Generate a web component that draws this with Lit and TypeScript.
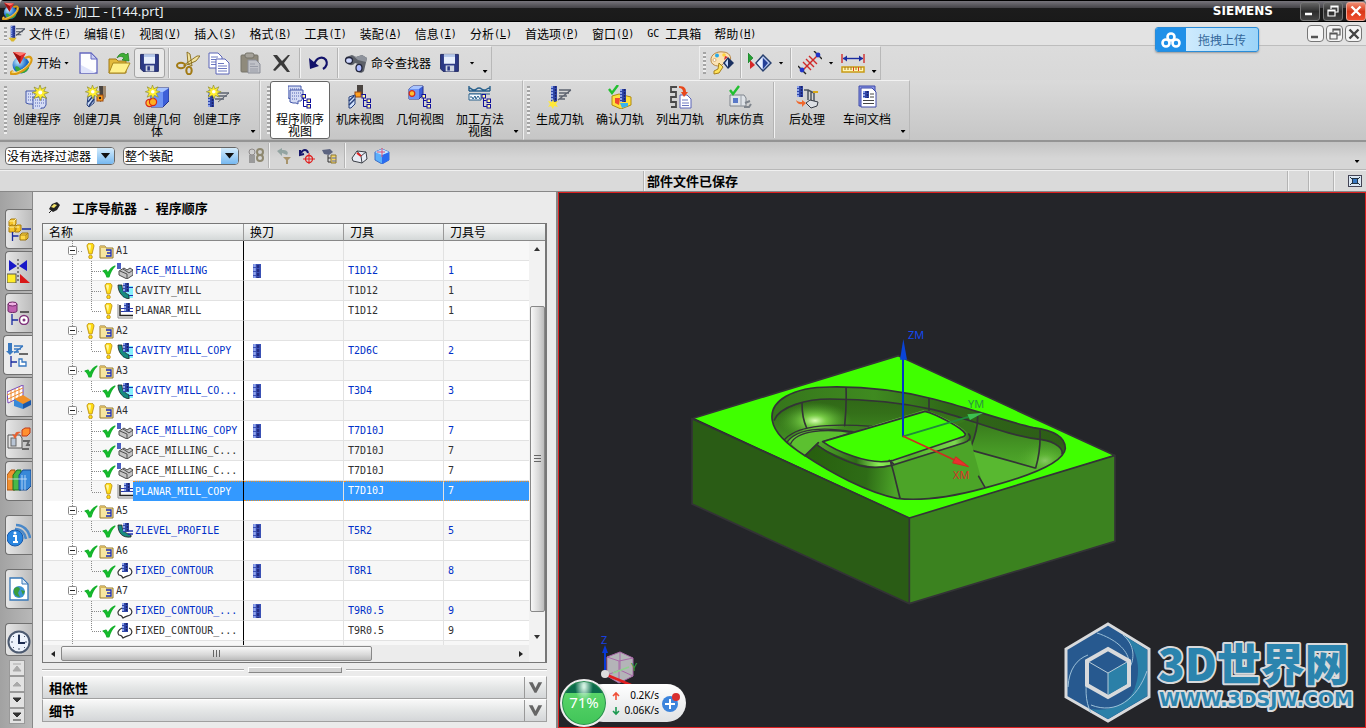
import { LitElement, html, svg, css, nothing } from "lit";
import { customElement } from "lit/decorators.js";
import { classMap } from "lit/directives/class-map.js";

const icon = (body: unknown, w = 24, h = 24) =>
  html`<svg class="ico" width=${w} height=${h} viewBox="0 0 ${w} ${h}" aria-hidden="true">${body}</svg>`;

/* ---- shared glyph parts ---- */
const star = svg`<path d="M15 0l1.500 4.200L21 2l-2.200 4.200L23.500 7.500l-4.500 1.800 2.500 4.200-4.500-2L15.500 15.500 13.800 11.500 9 13.500l2.200-4.500L7 7.500l4.300-1.500L9 2l4.500 2.200z" fill="#ffee2e" stroke="#8a8a30" stroke-width=".7"/><circle cx="15.300" cy="7.500" r="2" fill="#fff"/>`;
const miniTree = svg`<path d="M15.500 12v9.500h3M15.500 15.500h3M15.500 21.500h3" fill="none" stroke="#10109a"/><rect x="14" y="9.500" width="3.500" height="3.500" fill="#fff7a0" stroke="#10109a"/><rect x="19" y="14" width="3.500" height="3.500" fill="#fff7a0" stroke="#10109a"/><rect x="19" y="19.500" width="3.500" height="3.500" fill="#fff7a0" stroke="#10109a"/>`;
const sheet = (x: number, y: number) => svg`<path d="M${x} ${y}h13v8l-2 3h-3v3l-2-1h-3l-3-1z" fill="#d5dcf5" stroke="#4256a8"/><path d="M${x + 2} ${y + 3}h9M${x + 2} ${y + 6}h9M${x + 2} ${y + 9}h6" stroke="#5264b4" stroke-dasharray="1 1"/>`;
const cutter = (x: number, y: number, h: number) => svg`<rect x=${x} y=${y} width="6" height=${h} fill="#2f46a8"/><path d="M${x + 1} ${y}v${h}" stroke="#8fa4ea" stroke-width="2" stroke-dasharray="2 1"/><path d="M${x + 4.5} ${y}v${h}" stroke="#1b226c" stroke-width="1.500" stroke-dasharray="2 1"/>`;
const floppy = svg`<path d="M1 2h21v20H4l-3-3z" fill="#2c3a86" stroke="#161f58"/><rect x="5" y="2" width="13" height="11" fill="#e7effc"/><rect x="5" y="2" width="13" height="3" fill="#b5c8ea"/><rect x="7" y="15" width="10" height="7" fill="#cfd6e2"/><rect x="9" y="16" width="3" height="5" fill="#2c3a86"/>`;
const nx = svg`<circle cx="11" cy="14" r="8.500" fill="url(#gl)"/><path d="M5 16c3-2 5 1 7 5 3-2 5-5 7-8 1 6-4 10-9 9-3-1-5-3-5-6z" fill="#36a83c"/><path d="M3 20c-5 3-1 4 5 2 8-3 15-11 13-15-1-2-4-1-6 0" fill="none" stroke="#d99a14" stroke-width="2.500"/><path d="M3 20c-3 2 0 2 4 1C15 18 21 12 20 8" fill="none" stroke="#ffe27a" stroke-width="1"/><path d="M3 1l13 1-6 11z" fill="#e02828"/><path d="M3 1l7 12 1-9z" fill="#9d1010"/><path d="M3 1l13 1-6 3z" fill="#ff7a70"/>`;
const arrowTools = svg`<path d="M13 8h11M12 11h10M10 14h9" stroke="#5e6470" stroke-width="1.500"/><path d="M24 8L13 17" stroke="#5e6470"/>`;

const I = {
  nx: icon(nx),
  fresh: icon(svg`<path d="M4 2h11l6 6v14H4z" fill="#fdfdff" stroke="#6468c0" stroke-width="1.300"/><path d="M5 14L20 22H5z" fill="#dfe3fa"/><path d="M15 2v6h6z" fill="#c9cef2" stroke="#6468c0"/>`),
  open: icon(svg`<path d="M2 8h7l2 2h8v12H2z" fill="#e2b93c" stroke="#a07a18"/><path d="M2 22l4-10h17l-5 10z" fill="#fff08a" stroke="#a8861c"/><path d="M10 7c2-5 7-6 9-3l2-2 1 8-7-1 2-2c-2-2-5-2-7 0z" fill="#3fae36" stroke="#1e7a1c" stroke-width=".7"/>`),
  cut: icon(svg`<path d="M8 14L21 5l3 0-4 5-12 5zM12 13L11 1l3 2 2 12z" fill="#f2e3a0" stroke="#866a18" stroke-width=".9"/><ellipse cx="5" cy="14.500" rx="4" ry="2.700" fill="none" stroke="#a27a14" stroke-width="2"/><ellipse cx="13" cy="19.500" rx="2.700" ry="3.800" fill="none" stroke="#a27a14" stroke-width="2"/>`),
  copy: icon(svg`<path d="M2 2h9l4 4v11H2z" fill="#fff" stroke="#5a64b8"/><path d="M4 6h7M4 8.500h8M4 11h8M4 13.500h8" stroke="#6c78c0"/><path d="M9 8h9l4 4v11H9z" fill="#fff" stroke="#5a64b8"/><path d="M11 12.500h6M11 15h9M11 17.500h9M11 20h9" stroke="#6c78c0"/>`),
  paste: icon(svg`<rect x="3" y="4" width="17" height="17" rx="1" fill="#8f8a7c" stroke="#77746a"/><rect x="7" y="2" width="9" height="5" rx="2" fill="#a5a29a" stroke="#77746a"/><path d="M10 9h8l4 4v9H10z" fill="#c0c2c8" stroke="#8b8e98"/><path d="M12 13h5M12 15.500h8M12 18h8M12 20h8" stroke="#9a9da8"/>`),
  del: icon(svg`<path d="M4 4l4 0 5 6 6-6 2 0-6 8 6 9h-3l-6-7-6 6-2-1 6-7z" fill="#3a3a3a"/>`),
  undo: icon(svg`<path d="M7 14c2-8 9-9 12-5 2 4 0 7-3 9" fill="none" stroke="#12126a" stroke-width="2.200"/><path d="M2 7l1 11 9-3z" fill="#12126a"/>`),
  find: icon(svg`<path d="M2 6l6-2 4 2 6-2 5 3-3 13c-2 3-6 2-7-1l1-6-3-1c-3 4-8 2-10-2z" fill="#5c6068"/><path d="M8 4l4 2 6-2 5 3-1 4-8-2z" fill="#8e939c"/><ellipse cx="5" cy="9.500" rx="3.500" ry="3" fill="#cfd8ff" stroke="#23263c" stroke-width="1.300"/><ellipse cx="15" cy="17" rx="3" ry="3.600" fill="#aebcff" stroke="#23263c" stroke-width="1.300"/>`),
  palette: icon(svg`<path d="M1 10C0 3 8 0 13 1c6 0 9 5 7 9-2 3-7 1-8 4-3 2-10 1-11-4z" fill="#fbe3b4" stroke="#b98848"/><circle cx="7" cy="4.500" r="2" fill="#29a8e8"/><circle cx="14" cy="4" r="1.800" fill="#ffd23a"/><circle cx="4.500" cy="9" r="1.500" fill="#fff" stroke="#b98848" stroke-width=".6"/><path d="M9 12l4 4-4 6-5 1 0-3 4-2z" fill="#ffe35a" stroke="#a8801c"/><path d="M18 6l6 6-6 6-5-6z" fill="#1a3060"/><path d="M18 8v8l-3-4z" fill="#c8ddff"/><path d="M15 5l-1 4 4-3z" fill="#d63030"/>`),
  swap: icon(svg`<path d="M0 2v10l5-5z" fill="#24a034" stroke="#147020" stroke-width=".6"/><path d="M2 9v9l5-4z" fill="#d62828"/><path d="M15 4l8 8-8 8-7-8z" fill="#b8c8f0" stroke="#28406e" stroke-width="1.500"/><path d="M14 7v11l-5-6z" fill="#e8f0ff"/><path d="M15 7v11l5-6z" fill="#244098"/>`),
  section: icon(svg`<path d="M4 20L20 4" stroke="#d02828" stroke-width="1.400"/><path d="M5 11l8 8M8 8l8 8M11 5l8 8" stroke="#d02828" stroke-width="1.400"/><path d="M0 15l8 8M16 0l8 8" stroke="#222" stroke-width="1.400"/><circle cx="4" cy="19" r="2.400" fill="#2034c8"/><circle cx="20" cy="4" r="2.400" fill="#2034c8"/>`),
  ruler: icon(svg`<path d="M1 3v9M23 3v9" stroke="#d02020" stroke-width="1.300"/><path d="M2 7.500h20" stroke="#1a2ca0" stroke-width="1.400"/><path d="M2 7.500l4-3v6zM22 7.500l-4-3v6z" fill="#1a2ca0"/><rect x="1" y="16" width="22" height="5" fill="#fff6b4" stroke="#c89a14" stroke-width="1.500"/><path d="M4 16v3M7 16v3M10 16v3M15 16v3M20 16v3" stroke="#a47414"/><path d="M12.500 16v4M17.500 16v4" stroke="#e04020"/>`),
  mkProg: icon(svg`${sheet(1, 6)}${sheet(8, 12)}${star}`),
  mkTool: icon(svg`<path d="M14 1h6v12l-5 4z" fill="#4a4440"/><path d="M18 1h3v11l-3 3z" fill="#a08a70"/><path d="M3 12l6-3v9l-5 4-2-2z" fill="#cfe0fb" stroke="#28407a"/><path d="M4 21l5-7M3 17l5-6" stroke="#28407a" stroke-width="1.500"/><rect x="12" y="10" width="6" height="6" fill="#ffa020" stroke="#9c4a10"/><circle cx="15" cy="13" r="1.200" fill="#222"/><g transform="translate(-6 0) scale(.9)">${star}</g>`),
  mkGeo: icon(svg`<path d="M6 7l5-4h13v13l-6 6H6z" fill="#3d5fd8" stroke="#24348c"/><path d="M6 7h12l6-4H11z" fill="#a8c4ff"/><path d="M6 7h12v15H6z" fill="#6f94f4"/><circle cx="4.500" cy="18" r="3.600" fill="#ffc030" stroke="#d82818" stroke-width="1.200"/><circle cx="8" cy="17" r="3.600" fill="#ffb020" stroke="#d82818" stroke-width="1.200"/><g transform="translate(-6 0) scale(.9)">${star}</g>`),
  mkOp: icon(svg`${cutter(3, 5, 17)}${arrowTools}<g transform="translate(-5 0) scale(.9)">${star}</g>`),
  vProg: icon(svg`${sheet(0, 1)}${sheet(2, 5)}${miniTree}`),
  vMach: icon(svg`<path d="M9 0h6v10H9z" fill="#4a4440"/><rect x="7" y="7" width="6" height="5" fill="#ffa020" stroke="#9c4a10"/><path d="M1 12l6-2v9l-4 4H1z" fill="#cfe0fb" stroke="#28407a"/><path d="M1 20l6-6M1 16l5-5" stroke="#28407a" stroke-width="1.500"/>${miniTree}`),
  vGeo: icon(svg`<path d="M1 4l4-3h10v9l-4 4H1z" fill="#3d5fd8" stroke="#24348c"/><path d="M1 4h10l4-3H5z" fill="#a8c4ff"/><path d="M1 4h10v10H1z" fill="#6f94f4"/><circle cx="4" cy="8.500" r="2.800" fill="#ffc030" stroke="#d82818" stroke-width="1.200"/>${miniTree}`),
  vMeth: icon(svg`<path d="M1 1v5M22 1v5M1 6h21M1 3c3 0 2 2 5 2s2-2 5-2 2 2 5 2 3-2 6-2" fill="none" stroke="#28608c" stroke-width="1.400"/><path d="M1 9h21" stroke="#28608c"/><path d="M1 9h12v6H1z" fill="#f4faff" stroke="#28608c"/><path d="M2 12h2l1 2 2-3 1 3 2-3 2 3" fill="none" stroke="#28608c"/>${miniTree}`),
  gen: icon(svg`${cutter(3, 1, 16)}<path d="M11 5h12M11 8h10M11 11h8M11 14h6M23 5L10 15" stroke="#5e6470" stroke-width="1.400"/><path d="M5 14l1 3 4-1-2 3 2 3-4-1-1 3-2-3-3 1 2-3-2-3 4 1z" fill="#ffe83a"/>`),
  verify: icon(svg`<path d="M4 11l7-2 12 3v8l-10 4-9-4z" fill="#ffdf3c" stroke="#b08a10"/><path d="M7 13h5l-1 7-4-2z" fill="#f04830"/><path d="M12 18h8v3l-6 2z" fill="#38b4f0"/>${cutter(12, 4, 13)}<path d="M1 4l3 4 6-8" fill="none" stroke="#22c030" stroke-width="2.400"/>`),
  list: icon(svg`<path d="M9 2H3v5h5v5H3v5h5v5H3" fill="none" stroke="#4a4a4a" stroke-width="1.800"/><path d="M12 10h7l4 4v9H12z" fill="#fff" stroke="#5a64b8"/><path d="M14 15h6M14 18h7M14 20.500h7" stroke="#6c78c0"/><path d="M11 1c6 0 7 3 7 6h2l-4 5-3-5h2c0-2-1-4-4-4z" fill="#e8481c"/>`),
  sim: icon(svg`<path d="M2 10h14l2 3v8H2z" fill="#dfe3e8" stroke="#7e848c"/><rect x="5" y="13" width="5" height="5" fill="#5878c8"/><path d="M13 10v11" stroke="#9aa0a8"/><path d="M17 18l5-2M16 22h5l2-3" fill="none" stroke="#7e848c" stroke-width="2"/><path d="M2 5l3 4 6-8" fill="none" stroke="#22c030" stroke-width="2.400"/>`),
  post: icon(svg`${cutter(2, 1, 11)}<path d="M9 5h4v10M13 5l6 3v10M16 6v12" fill="none" stroke="#4e5560" stroke-width="1.500"/><path d="M11 18l4-3 8 2-1 4-6 2z" fill="#dcdfe4" stroke="#343a44"/><rect x="18" y="6" width="5" height="2" fill="#d8a818"/><path d="M1 15c1 4 4 5 6 4v3l4-4-4-3v2c-2 0-4 0-6-2z" fill="#f0682c"/>`),
  doc: icon(svg`<path d="M4 1h16v20H4z" fill="#8a96e4" stroke="#3c48a8"/><path d="M6 3h11l4 4v15H6z" fill="#fff" stroke="#3c48a8"/>${cutter(8, 6, 7)}<path d="M15 9h4M15 12h4M8 15.500h11M8 18.500h11" stroke="#444"/>`),
};

const small = {
  chain: icon(svg`<path d="M1 7h6v8H1z" fill="#9a9a9a"/><circle cx="4" cy="4" r="3" fill="none" stroke="#8e8a8a"/><circle cx="12" cy="4" r="3" fill="none" stroke="#8e8870" stroke-width="2"/><circle cx="12" cy="10" r="3" fill="none" stroke="#8e8870" stroke-width="2"/>`, 16, 16),
  filt: icon(svg`<path d="M1 3l5-3v2c5 0 7 2 5 5L6 5v3z" fill="#93a4a2"/><path d="M7 9h8l-3 3v4h-2v-4z" fill="#a8946c"/>`, 16, 16),
  rotate: icon(svg`<path d="M1 2v5l4-1M2 5c2-4 6-4 7 0" fill="none" stroke="#16166c" stroke-width="2"/><circle cx="10" cy="11" r="3.500" fill="none" stroke="#e02020" stroke-width="1.300"/><path d="M10 5v11M4 11h12" stroke="#e02020"/>`, 16, 16),
  btree: icon(svg`<path d="M0 2l8-1 3 3-4 3-5-1z" fill="#5c6480"/><path d="M6 7v7h4M6 10h4" fill="none" stroke="#333"/><path d="M9 7h5v8H9z" fill="#f4d868" stroke="#8a7434"/><path d="M10 10h4M10 13h4" stroke="#5868b8"/>`, 16, 16),
  part: icon(svg`<path d="M1 10L6 3l9 1 1 7-5 4-9-2z" fill="#e8ecf4" stroke="#3c4048"/><path d="M6 3l4 5 1 7M10 8l5-4" fill="none" stroke="#3c4048"/><path d="M6 5l4 3" stroke="#e02020" stroke-width="2"/>`, 17, 16),
  cube: icon(svg`<path d="M1 4l7-3 7 3v8l-7 4-7-4z" fill="#5cb0fa" stroke="#3c6cc8"/><path d="M8 7l7-3v8l-7 4z" fill="#2b6cf0"/><path d="M1 4l7-3 7 3-7 3z" fill="#c8e6ff"/><path d="M8 0v9M3 4h8" stroke="#e05070"/>`, 17, 16),
};

const warn = icon(svg`<path d="M3 3c0-4 7-4 7 0l-2 8H5z" fill="#ffdc14" stroke="#b88a10" stroke-width=".8"/><path d="M4 3c1-2 3-1 3 0L6 9z" fill="#fff6a0"/><circle cx="6.500" cy="14" r="1.800" fill="#ffdc14" stroke="#b88a10" stroke-width=".8"/>`, 14, 16);
const ok = icon(svg`<path d="M1 8l3-1 2 3c2-4 4-6 7-7-3 3-5 6-6 11H5C4 11 3 9 1 8z" fill="#14c02c" stroke="#14b02a" stroke-width="1.200" stroke-linejoin="round"/>`, 14, 16);
const folder = icon(svg`<path d="M1 3h5l1 2h7v10H1z" fill="#f6e6a0" stroke="#96782a"/><path d="M1 3h5l1 2H1z" fill="#d8b860"/><path d="M7 7h5v6H7M8 10h4" fill="none" stroke="#1a2cb8" stroke-width="1.300"/>`, 15, 16);
const ops: Record<string, unknown> = {
  face: icon(svg`<path d="M2 8l5-3 3 2 3-2 3 2v5l-6 4-8-4z" fill="#c4c4c4" stroke="#4c4c4c"/><path d="M3 8l7 3v5M6 6l6 4 4-3" fill="none" stroke="#4c4c4c"/><rect x="0" y="0" width="4" height="6" fill="#4a5ec0"/>`, 16, 16),
  cavity: icon(svg`<rect x="6" y="3" width="10" height="12" fill="#86f0fc"/><path d="M1 2h4c0 6 3 8 7 10v4C6 15 1 10 1 2z" fill="#168a80" stroke="#222" stroke-width=".8"/><path d="M12 4.500h4M12 12.500h4" stroke="#2030b0"/>${cutter(6, 0, 9)}`, 16, 16),
  planar: icon(svg`<path d="M1 1v14h15" fill="none" stroke="#888"/><path d="M3 2v10.500h13" fill="none" stroke="#222" stroke-width="1.500"/><path d="M4 5.500h12M4 8.500h12" stroke="#2838b0"/>${cutter(7, 0, 9)}`, 16, 16),
  zlevel: icon(svg`<path d="M1 2h4c0 6 3 8 9 10v2C5 15 1 10 1 2z" fill="#168a80" stroke="#222" stroke-width=".8"/><path d="M11 8h5M11 11h5" stroke="#2030b0" stroke-width="1.300"/>${cutter(6, 0, 9)}`, 16, 16),
  fixed: icon(svg`<path d="M5 5C1 7 0 10 2 12c2 0 3 1 4 3 3-2 5-2 7-3 3-2 2-6-1-7" fill="#fff" stroke="#333" stroke-width="1.200"/>${cutter(5, 0, 9)}`, 16, 16),
};
const change = icon(svg`<rect x="0" y="0" width="8" height="14" fill="#3a50b4"/><path d="M1.500 0v14" stroke="#93a6ee" stroke-width="2.500" stroke-dasharray="3 1"/><path d="M5 1v13" stroke="#232c84" stroke-width="2.500" stroke-dasharray="3 1"/>`, 8, 14);

const tabIcons = [
  svg`<path d="M2 4l2-2h5v5l-2 2H2zM2 10l2-2h5v5l-2 2H2zM8 10l2-2h4v5l-2 2H8z" fill="#f6c428" stroke="#a87c10"/><path d="M2 4h5l2-2M7 4v4M2 10h5M8 10h4" fill="none" stroke="#fff2a0"/><path d="M5.500 15v9M5.500 19h6M15 12h9" stroke="#1a2ca0" stroke-width="1.300"/><path d="M13 18l2-2h6v5l-2 2h-6z" fill="#ffd844" stroke="#9c7410"/><path d="M13 18h6v5M19 18l2-2" fill="none" stroke="#9c7410" stroke-width=".8"/>`,
  svg`<path d="M2 1v11l8-5zM20 1v11l-8-5z" fill="#1818c8"/><path d="M11 0v24" stroke="#222" stroke-dasharray="2 2"/><rect x="0" y="15" width="9" height="9" fill="#ffec28" stroke="#555"/><path d="M13 15v9h10z" fill="#d81818"/>`,
  svg`<path d="M1 3v7c0 2 9 2 9 0V3" fill="#c060b0" stroke="#6c2464"/><ellipse cx="5.500" cy="3" rx="4.500" ry="2" fill="#f0b0e4" stroke="#6c2464"/><path d="M13 11h9" stroke="#222" stroke-width="1.300"/><path d="M5 13v11M5 19h6" stroke="#1a2ca0" stroke-width="1.300"/><circle cx="17" cy="19" r="4.500" fill="#fff" stroke="#80347c" stroke-width="1.500"/><circle cx="17" cy="19" r="1.500" fill="#80347c"/>`,
  svg`<path d="M2 0h4v8h2l-4 4-4-4h2z" fill="#3878c0"/><path d="M8 3h9M8 6h7M8 9h5M17 3L8 10" stroke="#3878c0" stroke-width="1.400"/><path d="M13 11h9" stroke="#222" stroke-width="1.300"/><path d="M5 13v11M5 19h6" stroke="#1a2ca0" stroke-width="1.300"/><path d="M13 16h3v3h4v4h-7z" fill="#fff" stroke="#3878c0" stroke-width="1.300"/>`,
  svg`<path d="M0 7L16 0v11L1 18z" fill="#fff" stroke="#7848b8"/><path d="M0 10l16-7M1 14l15-7M4 5v11M8 4v11M12 2v11" stroke="#f08c30"/><path d="M7 14l9-4 8 5-8 5z" fill="#f09028"/><path d="M7 14l9 5v5l-9-3z" fill="#3888d8"/><path d="M16 19l8-4v5l-8 4z" fill="#1c58a8"/>`,
  svg`<path d="M1 8h12l2 3v10H1z" fill="#e4e4e4" stroke="#555"/><rect x="4" y="11" width="5" height="8" fill="#b8c4d4" stroke="#666"/><path d="M16 14h6l-2 4h3M15 22h7" fill="none" stroke="#666" stroke-width="1.800"/><path d="M15 3l3-2h5v5l-3 3h-5z" fill="#ff9030" stroke="#c03818"/><path d="M14 5c-4-1-6 0-6 3l-3-1 3 5 3-5" fill="#e86030"/>`,
  svg`<path d="M0 6l4-5h4v20H0z" fill="#f09030" stroke="#a85010"/><path d="M6 6l4-5h4v20H6z" fill="#48b848" stroke="#1c7020"/><path d="M12 6l4-5h8v16l-4 4h-8z" fill="#3888d8" stroke="#184c94"/><path d="M15 6v15M18 6v15M1 10h19" stroke="#cfe6ff" stroke-width=".8"/>`,
  svg`<path d="M9 2c7 0 13 5 14 13M8 6c6 0 10 4 11 10" fill="none" stroke="#4a88c8" stroke-width="2.600"/><circle cx="8" cy="15" r="8" fill="#2a86e0" stroke="#1858a8"/><path d="M6 13h3v6M6 19h5" fill="none" stroke="#fff" stroke-width="2"/><circle cx="8" cy="10" r="1.500" fill="#fff"/>`,
  svg`<path d="M3 1h12l6 6v16H3z" fill="#fff" stroke="#3878b8" stroke-width="1.300"/><path d="M15 1v6h6z" fill="#d8e8f8" stroke="#3878b8"/><circle cx="12" cy="15" r="6" fill="#3c94d4"/><path d="M7 12c3-3 5-2 6 0l-2 4 2 4c-4 0-7-3-6-8zM14 13l4 1-2 4z" fill="#3a9c3c"/>`,
  svg`<circle cx="12" cy="12" r="10.500" fill="#eef4fc" stroke="#4c5a70" stroke-width="2"/><path d="M12 4v2M12 18v2M4 12h2M18 12h2M6 6l1 1M17 7l1-1M6 18l1-1M17 17l1 1" stroke="#4c5a70"/><path d="M12 5v8h6" fill="none" stroke="#1c2c50" stroke-width="2"/>`,
];

type Row = { group?: string; ok?: boolean; op?: string; name?: string; hot?: boolean; tool?: string; no?: string; last?: boolean; selected?: boolean };
const rows: Row[] = [
  { group: "A1" },
  { op: "face", ok: true, name: "FACE_MILLING", hot: true, tool: "T1D12", no: "1" },
  { op: "cavity", name: "CAVITY_MILL", tool: "T1D12", no: "1" },
  { op: "planar", name: "PLANAR_MILL", tool: "T1D12", no: "1", last: true },
  { group: "A2" },
  { op: "cavity", name: "CAVITY_MILL_COPY", hot: true, tool: "T2D6C", no: "2", last: true },
  { group: "A3", ok: true },
  { op: "cavity", ok: true, name: "CAVITY_MILL_CO...", hot: true, tool: "T3D4", no: "3", last: true },
  { group: "A4" },
  { op: "face", ok: true, name: "FACE_MILLING_COPY", hot: true, tool: "T7D10J", no: "7" },
  { op: "face", ok: true, name: "FACE_MILLING_C...", tool: "T7D10J", no: "7" },
  { op: "face", ok: true, name: "FACE_MILLING_C...", tool: "T7D10J", no: "7" },
  { op: "planar", name: "PLANAR_MILL_COPY", tool: "T7D10J", no: "7", last: true, selected: true },
  { group: "A5", ok: true },
  { op: "zlevel", ok: true, name: "ZLEVEL_PROFILE", hot: true, tool: "T5R2", no: "5", last: true },
  { group: "A6", ok: true },
  { op: "fixed", ok: true, name: "FIXED_CONTOUR", hot: true, tool: "T8R1", no: "8", last: true },
  { group: "A7", ok: true },
  { op: "fixed", ok: true, name: "FIXED_CONTOUR_...", hot: true, tool: "T9R0.5", no: "9" },
  { op: "fixed", ok: true, name: "FIXED_CONTOUR_...", tool: "T9R0.5", no: "9", last: true },
  {},
];

const menus: [string, string][] = [
  ["文件", "F"], ["编辑", "E"], ["视图", "V"], ["插入", "S"], ["格式", "R"], ["工具", "T"], ["装配", "A"],
  ["信息", "I"], ["分析", "L"], ["首选项", "P"], ["窗口", "O"], ["工具箱", ""], ["帮助", "H"],
];

@customElement("app-root")
export class AppRoot extends LitElement {
  static styles = css`
    :host { display: block; font: 12px/16px "Noto Sans CJK SC", "Noto Sans", sans-serif; color: #000; }
    * { box-sizing: border-box; }
    button, select { font: inherit; color: inherit; background: none; border: 0; padding: 0; margin: 0; border-radius: 0; }
    svg { display: block; flex: none; }
    .shell { display: flex; flex-direction: column; height: 100vh; min-width: 1000px; overflow: hidden; background: #d9d9d9; position: relative; }
    .defs { position: absolute; }
    .mono { font: 10px/16px "DejaVu Sans Mono", monospace; }

    .title { display: flex; align-items: center; height: 22px; flex: none; color: #fff; font-family: "Noto Sans", "Noto Sans CJK SC", sans-serif; font-size: 13px;
      background: linear-gradient(#000 0 1px, #77757c 1px, #444347 8px, #1c1c1c 8px, #1a1a1a 21px, #000 21px); padding-left: 2px; border-radius: 4px 4px 0 0; }
    .title h1 { font: inherit; margin: 0 auto 0 4px; color: #e8f0f4; }
    .brand { font: bold 12px/16px "DejaVu Sans", sans-serif; margin-right: 27px; }
    .win { display: flex; gap: 3px; }
    .win button { width: 20px; height: 19px; border: 1px solid #777; border-radius: 3px; background: linear-gradient(#666, #2c2c2c 50%, #444); display: grid; place-items: center; }
    .win .close { background: linear-gradient(#f08a70, #d83818 50%, #f05030); border-color: #e8a898; }

    .menu { display: flex; align-items: center; height: 24px; flex: none; padding: 0 4px; background: #e3e3e3; border-bottom: 1px solid #bdbdbd; }
    .menu nav { display: flex; gap: 13px; flex: 1; margin-left: 4px; }
    .menu nav button { display: flex; white-space: pre; }
    .mdi { display: flex; gap: 2px; }
    .mdi button { width: 17px; height: 17px; border: 1px solid #777; border-radius: 4px; background: #f4f4f4; display: grid; place-items: center; }
    .grip { width: 3px; align-self: stretch; margin: 5px 0; flex: none; background: repeating-linear-gradient(#a4a4a4 0 2px, #eee 2px 4px); }

    .bar { display: flex; flex: none; }
    .group { display: flex; align-items: center; border: 1px solid #b8b8b8; border-left-color: #eee; border-top-color: #f2f2f2; padding-left: 3px; }
    .group.first { border-left: 0; padding-left: 4px; }
    .group.views { padding-left: 6px; }
    .tools { height: 34px; background: linear-gradient(#dcdcdc, #d8d8d8); }
    .tools .group.display { margin-left: 207px; }
    .tool { width: 31px; height: 30px; display: grid; place-items: center; flex: none; }
    .tool.boxed { border: 1px solid #a4a4a4; border-radius: 3px; background: #e9e9e9; }
    .start, .finder { display: flex; align-items: center; height: 30px; gap: 3px; padding: 0 3px; white-space: nowrap; }
    .sep { width: 2px; align-self: stretch; margin: 1px 2px 1px 3px; background: linear-gradient(90deg, #b4b4b4 50%, #f2f2f2 50%); flex: none; }
    .drop { width: 14px; display: grid; place-items: center; align-self: stretch; flex: none; }
    .display .drop { width: 12px; }
    .drop.low { width: 12px; align-items: end; padding-bottom: 6px; }
    .caret { width: 5px; height: 3px; background: #000; clip-path: polygon(0 0, 100% 0, 50% 100%); display: block; }

    .ribbon { height: 62px; background: linear-gradient(#dadada, #c6c6c6); border-bottom: 2px solid #949494; }
    .big { width: 60px; height: 58px; padding: 3px 5px 0; display: flex; flex-direction: column; align-items: center; gap: 4px; line-height: 12px; border: 1px solid transparent; flex: none; }
    .big.on { background: #fff; border-color: #666; border-radius: 3px; }

    .filters { height: 28px; align-items: center; padding-left: 5px; background: linear-gradient(#c4c4c4, #d6d6d6 60%); border-bottom: 1px solid #b8b8b8; }
    .pick { position: relative; display: block; margin-right: 8px; width: 110px; height: 18px; border: 1px solid #666; border-radius: 4px; background: #fff; overflow: hidden; }
    .pick.wide { width: 116px; }
    .pick select { appearance: none; width: 100%; height: 16px; line-height: 16px; padding-left: 1px; }
    .pick i { position: absolute; right: 0; top: 0; width: 17px; height: 16px; background: linear-gradient(#d4ecfc, #76b8f0); display: grid; place-items: center; pointer-events: none; }
    .pick i::after { content: ""; width: 10px; height: 6px; background: #111; clip-path: polygon(0 0, 100% 0, 50% 100%); }
    .mini { width: 23px; height: 20px; display: grid; place-items: center; flex: none; }
    .mini.link { width: 18px; }
    .filters .drop { margin-left: auto; width: 18px; }

    .status { display: flex; height: 22px; flex: none; background: #dadada; border-top: 1px solid #f0f0f0; border-bottom: 1px solid #888; }
    .status > * { border-right: 1px solid #b4b4b4; box-shadow: 1px 0 #f2f2f2; }
    .status .blank { flex: 0 1 644px; }
    .status .msg { flex: 0 1 644px; margin: 0; font-weight: bold; font-size: 13px; line-height: 19px; padding-left: 3px; white-space: nowrap; }
    .status .cell { width: 21px; flex: none; }
    .status .cell.end { flex: 1 0 24px; }
    .status .full { border: 0; box-shadow: none; width: 32px; display: grid; place-items: center; padding-left: 10px; }

    .main { display: flex; flex: 1; min-height: 0; }
    .rail { width: 33px; flex: none; display: flex; flex-direction: column; align-items: flex-end; background: linear-gradient(90deg, #a2a2a2, #b8b8b8); border-right: 1px solid #888; padding-top: 17px; gap: 2px; overflow: hidden; }
    .tab { width: 27px; height: 40px; flex: none; border: 1px solid #707070; border-right: 0; border-radius: 4px 0 0 4px; background: linear-gradient(90deg, #e6e6e6, #bcbcbc); display: grid; place-items: center; }
    .tab.on { width: 29px; background: #ececec; }
    .tab.apart { margin-top: 12px; }
    .tab.cut { height: 33px; align-items: start; padding-top: 6px; }
    .nudge { display: flex; flex-direction: column; margin: 2px 7px 0 0; }
    .nudge button { width: 16px; height: 16px; background: #e2e2e2; border: 1px solid #999; display: grid; place-items: center; }

    .panel { flex: none; width: 523px; display: flex; flex-direction: column; background: #ebebeb; padding: 0 9px 6px; min-height: 0; }
    .panel h2 { display: flex; align-items: center; gap: 7px; margin: 0; height: 31px; padding-left: 6px; font-size: 13px; }
    .panel h2 svg { margin-right: 5px; }
    .grid { flex: 1; min-height: 0; border: 1px solid #777; border-right-width: 2px; background: #f2f2f2; display: grid; grid-template-columns: minmax(0, 1fr) 16px; grid-template-rows: minmax(0, 1fr) 17px; }
    .clip { overflow: hidden; min-height: 0; }
    table { border-collapse: separate; border-spacing: 0; table-layout: fixed; width: 100%; }
    col.name { width: 201px; } col.std { width: 100px; }
    th { height: 17px; padding: 0 0 0 6px; font-weight: normal; line-height: 14px; text-align: left; background: linear-gradient(#f4f6f6, #e8eaea 50%, #d4d8d8); border-bottom: 1px solid #888; border-right: 1px solid #999; }
    th:last-child { border-right: 0; }
    td { height: 20px; padding: 1px 0 0 4px; background: #fff; border-bottom: 1px solid #e2e2e2; border-right: 1px solid #e2e2e2; color: #303030; white-space: nowrap; }
    td:last-child { border-right: 0; }
    tr:nth-child(odd) td { background: #f7f7f7; }
    td.tree { padding: 0; border-right-color: #000; }
    td.swap { padding-left: 9px; }
    tr.hot td { color: #0030c8; }
    .node { display: flex; align-items: center; height: 19px; overflow: hidden; }
    .node .label { flex: 1; padding: 1px 0 0 2px; line-height: 18px; }
    .node .gap { width: 1px; }
    tr.picked td:not(.tree), .picked .label { color: #fff; background: #3399ff; border-top: 1px dotted #f09020; border-bottom: 1px dotted #f09020; }
    tr.picked td:not(.tree) { padding-top: 0; line-height: 18px; }
    tr.picked td.tree { border-bottom-width: 0; }
    .picked .node { height: 20px; }
    .vbar { display: flex; flex-direction: column; align-items: center; }
    .vhead { height: 17px; width: 100%; flex: none; border-bottom: 1px solid #888; background: linear-gradient(#f4f6f6, #e8eaea 50%, #d4d8d8); }
    .vbar button, .hbar button { width: 16px; height: 16px; display: grid; place-items: center; flex: none; }
    .vroom { flex: 49; }
    .vthumb { flex: 306; width: 15px; border: 1px solid #888; border-radius: 2px; background: linear-gradient(90deg, #f8f8f8, #d8d8d8 60%, #bbb); display: grid; place-items: center; }
    .vrest { flex: 17; }
    .hbar { display: flex; align-items: center; padding-left: 2px; background: #ececec; }
    .hthumb { flex: 309; height: 15px; border: 1px solid #888; border-radius: 2px; background: linear-gradient(#f8f8f8, #d8d8d8 60%, #bbb); display: grid; place-items: center; }
    .hrest { flex: 141; }
    .split { display: flex; align-items: center; gap: 4px; height: 13px; flex: none; }
    .split::before, .split::after { content: ""; flex: 1; height: 2px; background: linear-gradient(#aaa 50%, #fff 50%); }
    .split span { width: 94px; height: 6px; background: #d4d4d4; border: 1px solid #fff; border-right-color: #888; border-bottom-color: #888; }
    .fold { display: flex; align-items: center; height: 23px; flex: none; width: 100%; text-align: left; font-weight: bold; font-size: 13px; padding-left: 6px; background: linear-gradient(#f8f8f8, #e4e6e6 50%, #d4d6d8); border: 1px solid #a0a0a0; border-top-color: #fff; }
    .fold span { flex: 1; }
    .fold svg { border-left: 1px solid #999; }

    .gutter { width: 2px; background: #888; flex: none; }
    .view { flex: 1; min-width: 0; border: 1px solid #dc2020; background: #242529; position: relative; overflow: hidden; }
    .scene { width: 100%; height: 100%; }
    .axis { font-family: "Noto Sans", sans-serif; }
    .triad { position: absolute; left: 40px; bottom: 38px; }
    .mark { position: absolute; right: 4px; bottom: 2px; }
    .mark .name { font: 900 44px "Noto Sans CJK SC", sans-serif; }
    .mark .url { font: bold 19px "DejaVu Sans", sans-serif; }
    .speed { position: absolute; left: 1px; bottom: 0; display: flex; align-items: center; }
    .ball { width: 48px; height: 48px; border-radius: 50%; border: 2px solid #eee; box-shadow: inset 0 0 0 1px #2a8a50; background: radial-gradient(ellipse at 50% 12%, #d0f0e0 0 1px, transparent 9px), linear-gradient(#0c6c4c 0 28%, #58d468 28%, #40c458); color: #fff; font: 15px/42px "Noto Sans", sans-serif; text-align: center; z-index: 1; }
    .pill { height: 38px; margin-left: -24px; padding: 0 5px 0 28px; border-radius: 19px; background: linear-gradient(#fff, #e0e2e4); display: grid; grid-template-columns: 8px 37px 20px; grid-template-rows: 15px 15px; align-content: center; column-gap: 2px; align-items: center; font: 10px/15px "Noto Sans", sans-serif; width: 102px; }
    .pill b { font-weight: normal; text-align: right; }
    .pill .plus { grid-area: 1 / 3 / 3 / 4; }

    .upload { position: absolute; right: 107px; top: 27px; height: 25px; width: 104px; display: flex; border: 1px solid #2a8cd8; border-radius: 3px; overflow: hidden; background: linear-gradient(90deg, #e4f4ff, #9cd4f8); color: #33679a; box-shadow: 0 1px 2px #999; align-items: center; }
    .upload .cloud { width: 30px; height: 100%; background: #2090e8; display: grid; place-items: center; }
    .upload .txt { flex: 1; text-align: center; }
  `;

  caret(low = false) {
    return html`<button class=${low ? "drop low" : "drop"} aria-label="更多"><span class="caret"></span></button>`;
  }

  big(pic: unknown, text: string, on = false) {
    return html`<button class=${classMap({ big: true, on })}>${pic}<span>${text}</span></button>`;
  }

  winIcon(kind: string, color: string) {
    const body = kind === "min" ? svg`<path d="M1 9h7" stroke=${color} stroke-width="2.500"/>`
      : kind === "max" ? svg`<path d="M4 4V1h7v6H8M4 2h7M1 5h7v6H1zM1 6h7" fill="none" stroke=${color} stroke-width="1.200"/>`
      : svg`<path d="M1.500 1.500l9 9M10.500 1.500l-9 9" stroke=${color} stroke-width="2.400"/>`;
    return icon(body, 12, 12);
  }

  guide(r: Row) {
    const dot = "#8a8a8a";
    if (r.group) {
      return html`<svg width="41" height="19" viewBox="0 0 41 19"><path d="M29.500 0v5M29.500 15v4" stroke=${dot} stroke-dasharray="1 1"/><rect x="25.500" y="5.500" width="8" height="8" rx="1" fill="#fff" stroke="#888"/><path d="M27 9.500h5" stroke="#222"/><path d="M35 10.500h5" stroke=${dot} stroke-dasharray="1 2"/></svg>`;
    }
    if (!r.op) return html`<svg width="41" height="19"><path d="M29.500 0v19" stroke=${dot} stroke-dasharray="1 1"/></svg>`;
    return html`<svg width="59" height="19" viewBox="0 0 59 19"><path d="M29.500 0v19M49 10.500h9M48.500 0v${r.last ? 10 : 19}" fill="none" stroke=${dot} stroke-dasharray="1 1"/></svg>`;
  }

  row(r: Row) {
    return html`<tr class=${classMap({ hot: !!r.hot, picked: !!r.selected })}>
      <td class="tree"><div class="node">${this.guide(r)}
        ${r.group ? html`${r.ok ? ok : warn}<span class="gap"></span>${folder}<span class="label mono">${r.group}</span>`
          : r.op ? html`${r.ok ? ok : warn}<span class="gap"></span>${ops[r.op]}<span class="label mono">${r.name}</span>` : nothing}
      </div></td>
      <td class="swap">${r.hot ? change : nothing}</td>
      <td class="mono">${r.tool}</td>
      <td class="mono">${r.no}</td>
    </tr>`;
  }

  scene() {
    const edge = "#333336";
    return svg`
      <defs>
        <clipPath id="pocket"><path d="M277 305C266 245 340 204 450 204C570 202 680 220 760 240C850 262 960 302 1060 326C1120 334 1156 352 1156 388C1152 432 1040 474 910 508C800 538 720 546 650 538C560 520 450 460 375 410C310 370 282 335 277 305Z"/></clipPath>
        <linearGradient id="wall" x1="0" x2="1"><stop offset="0" stop-color="#35741b"/><stop offset=".35" stop-color="#3f8a20"/><stop offset=".6" stop-color="#2f6618"/><stop offset="1" stop-color="#2d5c17"/></linearGradient>
        <linearGradient id="fillet" x1="0" y1="0" x2="0" y2="1"><stop offset="0" stop-color="#2c5e16"/><stop offset=".25" stop-color="#347019"/><stop offset=".55" stop-color="#479a26"/><stop offset="1" stop-color="#64cc38"/></linearGradient>
        <radialGradient id="shine"><stop offset="0" stop-color="#dcffb8"/><stop offset=".3" stop-color="#86e050" stop-opacity=".8"/><stop offset="1" stop-color="#4ca428" stop-opacity="0"/></radialGradient>
        <linearGradient id="side" x1="400" x2="700" y1="400" y2="430" gradientUnits="userSpaceOnUse"><stop offset="0" stop-color="#28600f"/><stop offset=".55" stop-color="#2e6c16"/><stop offset=".85" stop-color="#4ca428"/></linearGradient>
        <linearGradient id="rim" x1="415" x2="870" y1="0" y2="0" gradientUnits="userSpaceOnUse"><stop offset="0" stop-color="#50a82c"/><stop offset=".25" stop-color="#2f6c18"/><stop offset=".4" stop-color="#8cf058"/><stop offset=".6" stop-color="#50b028"/><stop offset=".9" stop-color="#7cd850"/><stop offset="1" stop-color="#2f6c18"/></linearGradient>
      </defs>
      <g transform="translate(121 126) scale(.33333)" stroke-linejoin="round" stroke-linecap="round">
        <path d="M36 299L690 597V854L36 555Z" fill="#2a5c15"/>
        <path d="M688 597L1305 409V667L688 854Z" fill="#3b821f"/>
        <path d="M42 297L655 110L1303 409L690 597Z" fill="#40ff00"/>
        <path d="M655 110L42 297M655 110L1303 409M36 299V555L688 854L1305 667V409L688 597L36 299M688 597V854" fill="none" stroke=${edge} stroke-width="5"/>
        <g clip-path="url(#pocket)">
          <path d="M260 190H1170V560H260Z" fill="url(#fillet)"/>
          <path d="M270 310C300 262 380 240 450 240C580 240 680 254 760 272C870 300 980 350 1085 362C1130 368 1150 392 1146 408L1180 380L1100 190H260Z" fill="url(#wall)"/>
          <ellipse cx="405" cy="305" rx="110" ry="55" fill="url(#shine)"/>
          <ellipse cx="1095" cy="425" rx="90" ry="60" fill="url(#shine)" opacity=".4"/>
          <path d="M325 366C350 332 420 325 520 337L415 372L372 412Z" fill="#5cc030"/>
          <path d="M876 393L1065 447L1100 450L910 520L880 470Z" fill="#58b830"/>
          <path d="M800 330L870 300L892 330L876 372Z" fill="#35741b"/>
          <path d="M283 303C300 262 380 240 450 240C580 240 680 254 760 272C870 300 980 350 1085 362C1130 368 1150 392 1146 404" fill="none" stroke=${edge} stroke-width="5"/>
          <path d="M366 252C366 285 372 310 380 327M498 204C500 250 497 290 494 320M747 238V290M893 290C894 330 882 360 874 380M1080 335C1082 380 1075 420 1067 447M876 394L1065 447" fill="none" stroke=${edge} stroke-width="5"/>
          <path d="M310 366C345 322 430 312 580 322M322 368C350 332 420 322 520 338M332 374C350 336 430 326 525 342" fill="none" stroke=${edge} stroke-width="4"/>
          <path d="M415 372L375 410L420 470L640 560L915 520L872 365L640 430Z" fill="url(#side)"/>
          <path d="M896 472L915 505" stroke=${edge} stroke-width="5"/>
        </g>
        <path d="M415 370L730 274C760 276 850 325 866 345C872 356 872 362 862 368L640 434C600 448 560 442 530 432C490 418 440 395 415 380Z" fill="url(#rim)"/>
        <path d="M414 380C440 400 490 425 540 440C580 450 610 446 640 438L850 372C868 366 876 356 866 345" fill="none" stroke=${edge} stroke-width="5"/>
        <path d="M428 368L735 277C765 284 845 325 856 345C856 352 850 354 840 356L640 424C600 434 560 426 520 412C490 402 450 384 428 368Z" fill="#40ff00" stroke=${edge} stroke-width="5"/>
        <path d="M632 430C642 460 650 500 660 537M415 371L375 410M640 434L628 424" fill="none" stroke=${edge} stroke-width="5"/>
        <path d="M277 305C266 245 340 204 450 204C570 202 680 220 760 240C850 262 960 302 1060 326C1120 334 1156 352 1156 388C1152 432 1040 474 910 508C800 538 720 546 650 538C560 520 450 460 375 410C310 370 282 335 277 305Z" fill="none" stroke=${edge} stroke-width="5"/>
        <path d="M669 352V110" stroke="#0038c8" stroke-width="6"/><path d="M660 122L670 60L681 122Z" fill="#0a44d8"/>
        <path d="M670 352L870 292" stroke="#1f8a3c" stroke-width="5"/><path d="M862 286L910 281L870 303Z" fill="#3cc050"/>
        <path d="M670 352L830 426" stroke="#d02c20" stroke-width="5"/><path d="M828 414L866 443L819 432Z" fill="#e83030" stroke="#d02c20" stroke-width="3"/>
      </g>
      <g class="axis" font-size="11"><text x="349" y="146" fill="#1448f0">ZM</text><text x="409" y="215" fill="#2c9440">YM</text><text x="394" y="286" fill="#d83028">XM</text></g>`;
  }

  render() {
    const smallFloppy = icon(svg`<g transform="scale(.85) translate(2 2)">${floppy}</g>`);
    return html`<div class="shell">
      <svg class="defs" width="0" height="0"><defs><radialGradient id="gl" cx=".35" cy=".3"><stop offset="0" stop-color="#c8f0ff"/><stop offset="1" stop-color="#1668c8"/></radialGradient></defs></svg>
      <header class="title">
        <svg width="18" height="18" viewBox="0 0 24 24">${nx}</svg>
        <h1>NX 8.5 - 加工 - [144.prt]</h1>
        <span class="brand">SIEMENS</span>
        <div class="win">
          <button aria-label="最小化">${this.winIcon("min", "#fff")}</button>
          <button aria-label="还原">${this.winIcon("max", "#fff")}</button>
          <button class="close" aria-label="关闭">${this.winIcon("x", "#fff")}</button>
        </div>
      </header>
      <div class="menu">
        <span class="grip"></span>
        <svg width="18" height="18" viewBox="0 0 24 24">${cutter(5, 1, 17)}<path d="M12 5h12M12 9h9M12 13h7M24 5L12 14" stroke="#4e5460" stroke-width="1.500"/><path d="M2 17h11l-4 5H6z" fill="#d8b830"/></svg>
        <nav>${menus.map(([t, k]) => k
          ? html`<button>${t}<span class="mono">(<u>${k}</u>)</span></button>`
          : html`<button><span class="mono">GC </span>${t}</button>`)}</nav>
        <div class="mdi">
          <button aria-label="最小化窗口">${this.winIcon("min", "#555")}</button>
          <button aria-label="还原窗口">${this.winIcon("max", "#555")}</button>
          <button aria-label="关闭窗口">${this.winIcon("x", "#444")}</button>
        </div>
      </div>
      <div class="bar tools">
        <div class="group first"><span class="grip"></span>
          <button class="start">${I.nx}<span>开始</span><span class="caret"></span></button>
          <button class="tool" aria-label="新建">${I.fresh}</button>
          <button class="tool" aria-label="打开">${I.open}</button>
          <button class="tool boxed" aria-label="保存">${smallFloppy}</button>
          <span class="sep"></span>
          <button class="tool" aria-label="剪切">${I.cut}</button>
          <button class="tool" aria-label="复制">${I.copy}</button>
          <button class="tool" aria-label="粘贴">${I.paste}</button>
          <button class="tool" aria-label="删除">${I.del}</button>
          <span class="sep"></span>
          <button class="tool" aria-label="撤消">${I.undo}</button>
          <span class="sep"></span>
          <button class="finder">${I.find}<span>命令查找器</span></button>
          <button class="tool" aria-label="另存">${smallFloppy}</button>
          ${this.caret()}${this.caret(true)}
        </div>
        <div class="group display"><span class="grip"></span>
          <button class="tool" aria-label="渲染">${I.palette}</button>
          <span class="sep"></span>
          <button class="tool" aria-label="显示">${I.swap}</button>${this.caret()}
          <span class="sep"></span>
          <button class="tool" aria-label="测量">${I.section}</button>${this.caret()}
          <button class="tool" aria-label="标尺">${I.ruler}</button>${this.caret(true)}
        </div>
      </div>
      <div class="bar ribbon">
        <div class="group first"><span class="grip"></span>
          ${this.big(I.mkProg, "创建程序")}${this.big(I.mkTool, "创建刀具")}${this.big(I.mkGeo, "创建几何体")}${this.big(I.mkOp, "创建工序")}${this.caret(true)}
        </div>
        <div class="group views"><span class="grip"></span>
          ${this.big(I.vProg, "程序顺序视图", true)}${this.big(I.vMach, "机床视图")}${this.big(I.vGeo, "几何视图")}${this.big(I.vMeth, "加工方法视图")}${this.caret(true)}
        </div>
        <div class="group"><span class="grip"></span>
          ${this.big(I.gen, "生成刀轨")}${this.big(I.verify, "确认刀轨")}${this.big(I.list, "列出刀轨")}${this.big(I.sim, "机床仿真")}<span class="sep"></span>
          ${this.big(I.post, "后处理")}${this.big(I.doc, "车间文档")}${this.caret(true)}
        </div>
      </div>
      <div class="bar filters">
        <label class="pick"><select aria-label="类型过滤器"><option>没有选择过滤器</option></select><i></i></label>
        <label class="pick wide"><select aria-label="选择范围"><option>整个装配</option></select><i></i></label>
        <button class="mini link" aria-label="链接">${small.chain}</button><span class="sep"></span>
        <button class="mini" aria-label="重置">${small.filt}</button>
        <button class="mini" aria-label="旋转点">${small.rotate}</button>
        <button class="mini" aria-label="导航器查找">${small.btree}</button><span class="sep"></span>
        <button class="mini" aria-label="部件">${small.part}</button>
        <button class="mini" aria-label="立方体">${small.cube}</button>
        ${this.caret(true)}
      </div>
      <div class="status">
        <span class="blank"></span><p class="msg">部件文件已保存</p><span class="cell"></span><span class="cell end"></span>
        <button class="full" aria-label="全屏">${icon(svg`<rect x=".5" y="1.500" width="13" height="11" fill="#dce8f4" stroke="#445"/><rect x="4.500" y="4.500" width="5" height="5" fill="#3878c0" stroke="#234"/><path d="M2 3l2 2M12 3l-2 2M2 11l2-2M12 11l-2-2" stroke="#234"/>`, 14, 14)}</button>
      </div>
      <main class="main">
        <div class="rail">
          ${tabIcons.map((b, i) => html`<button class=${classMap({ tab: true, on: i === 3, apart: i > 6, cut: i === 9 })} aria-label="资源条 ${i + 1}">${icon(b)}</button>`)}
          <div class="nudge">
            ${["M1 1h8M1 8l4-5 4 5z", "M1 7l4-4 4 4z", "M1 3l4 4 4-4z", "M1 9h8M1 2l4 4 4-4z"].map((d, i) => html`<button aria-label="滚动 ${i + 1}">${icon(svg`<path d=${d} fill=${i < 2 ? "#aaa" : "#333"} stroke=${i < 2 ? "#aaa" : "#333"}/>`, 10, 10)}</button>`)}
          </div>
        </div>
        <section class="panel">
          <h2>${icon(svg`<path d="M1 8l3-5 5-2 3 3-3 5-4 2z" fill="#222"/><path d="M3 6l3-3 3 1-3 3z" fill="#f4e468"/><path d="M1 12l3-3" stroke="#222"/>`, 12, 13)}<span>工序导航器</span><span>-</span><span>程序顺序</span></h2>
          <div class="grid">
            <div class="clip"><table>
              <colgroup><col class="name"><col class="std"><col class="std"><col></colgroup>
              <thead><tr><th>名称</th><th>换刀</th><th>刀具</th><th>刀具号</th></tr></thead>
              <tbody>${rows.map((r) => this.row(r))}</tbody>
            </table></div>
            <div class="vbar"><span class="vhead"></span>
              <button aria-label="向上">${icon(svg`<path d="M1 6l3-4 3 4z" fill="#333"/>`, 8, 8)}</button>
              <span class="vroom"></span>
              <span class="vthumb">${icon(svg`<path d="M0 1.500h7M0 4.500h7M0 7.500h7" stroke="#666"/>`, 7, 9)}</span>
              <span class="vrest"></span>
              <button aria-label="向下">${icon(svg`<path d="M1 2l3 4 3-4z" fill="#333"/>`, 8, 8)}</button>
            </div>
            <div class="hbar">
              <button aria-label="向左">${icon(svg`<path d="M6 1L2 4l4 3z" fill="#222"/>`, 8, 8)}</button>
              <span class="hthumb">${icon(svg`<path d="M1.500 0v7M4.500 0v7M7.500 0v7" stroke="#666"/>`, 9, 7)}</span>
              <span class="hrest"></span>
              <button aria-label="向右">${icon(svg`<path d="M2 1l4 3-4 3z" fill="#222"/>`, 8, 8)}</button>
            </div>
          </div>
          <div class="split"><span></span></div>
          ${["相依性", "细节"].map((t) => html`<button class="fold"><span>${t}</span>${icon(svg`<path d="M4 5h4l3 6 3-6h4l-6 11h-2z" fill="#666"/>`, 22, 21)}</button>`)}
        </section>
        <span class="gutter"></span>
        <section class="view">
          <svg class="scene" viewBox="0 0 806 534">${this.scene()}</svg>
          <svg class="triad" width="44" height="58" viewBox="0 -6 44 58">
            <path d="M8 20l13-5 13 6v18l-14 7-12-7z" fill="#b4b4b8" stroke="#a868a8" stroke-width="1"/><path d="M8 20l12 4 14-3M20 24v22M21 15v18l13 6M21 33L8 38" fill="none" stroke="#a868a8"/>
            <path d="M6 36V14" stroke="#0838d8" stroke-width="2"/><path d="M3 16l3-8 3 8z" fill="#0838d8"/>
            <path d="M8 38l24 10" stroke="#e02020" stroke-width="2.500"/><path d="M14 36l16-6" stroke="#90d090" stroke-width="1.500"/><circle cx="6" cy="37" r="4" fill="#ddd"/>
            <text class="axis" x="2" y="7" font-size="11" fill="#1840e0">Z</text><text class="axis" x="32" y="34" font-size="11" fill="#30a040">Y</text>
          </svg>
          <svg class="mark" width="300" height="104" viewBox="0 0 300 104">
            <path d="M47 3L88 28V76L47 100L5 76V28Z" fill="#27598f" stroke="#d8dadc" stroke-width="3"/>
            <path d="M62 14L86 29V75L47 98L30 88C52 92 72 78 74 66C80 52 78 28 62 14Z" fill="#2b80a8"/>
            <path d="M36 12C54 18 66 28 68 40M7 66C8 48 16 38 27 34M30 92C24 80 24 66 27 52M30 84C55 94 76 78 86 50M62 14C74 24 74 38 68 48" fill="none" stroke="#9cc0d8" stroke-width="1"/>
            <path d="M47 28L68 40V64L47 76L26 64V40Z" fill="#27598f" stroke="#d8dadc" stroke-width="4"/>
            <path d="M47 52L66 41V63L47 74Z" fill="#2b80a8"/><path d="M28 41L47 52L66 41M47 52V74" fill="none" stroke="#b8ccd8"/>
            <g fill="#2b84ae" stroke="#d8dadc" stroke-width="4" paint-order="stroke" stroke-linejoin="round"><text class="name" x="97" y="60">3D世界网</text><text class="url" x="98" y="85">WWW.3DSJW.COM</text></g>
          </svg>
          <div class="speed"><span class="ball">71%</span>
            <div class="pill">
              ${icon(svg`<path d="M4 9V3M1 5l3-3 3 3" fill="none" stroke="#f05038" stroke-width="1.600"/>`, 8, 10)}<b>0.2K/s</b>
              ${icon(svg`<path d="M4 1v6M1 5l3 3 3-3" fill="none" stroke="#1c9850" stroke-width="1.600"/>`, 8, 10)}<b>0.06K/s</b>
              <svg class="plus" width="20" height="22" viewBox="0 0 20 22"><circle cx="9" cy="12" r="8" fill="#3c84dc"/><path d="M4 12h10M9 7v10" stroke="#fff" stroke-width="2"/><circle cx="15" cy="5" r="4" fill="#d83030"/></svg>
            </div>
          </div>
        </section>
      </main>
      <button class="upload"><span class="cloud">${icon(svg`<g fill="none" stroke="#fff" stroke-width="2.600"><circle cx="10" cy="5" r="3.500"/><circle cx="5" cy="11" r="3.500"/><circle cx="15" cy="11" r="3.500"/></g>`, 20, 16)}</span><span class="txt">拖拽上传</span></button>
    </div>`;
  }
}
